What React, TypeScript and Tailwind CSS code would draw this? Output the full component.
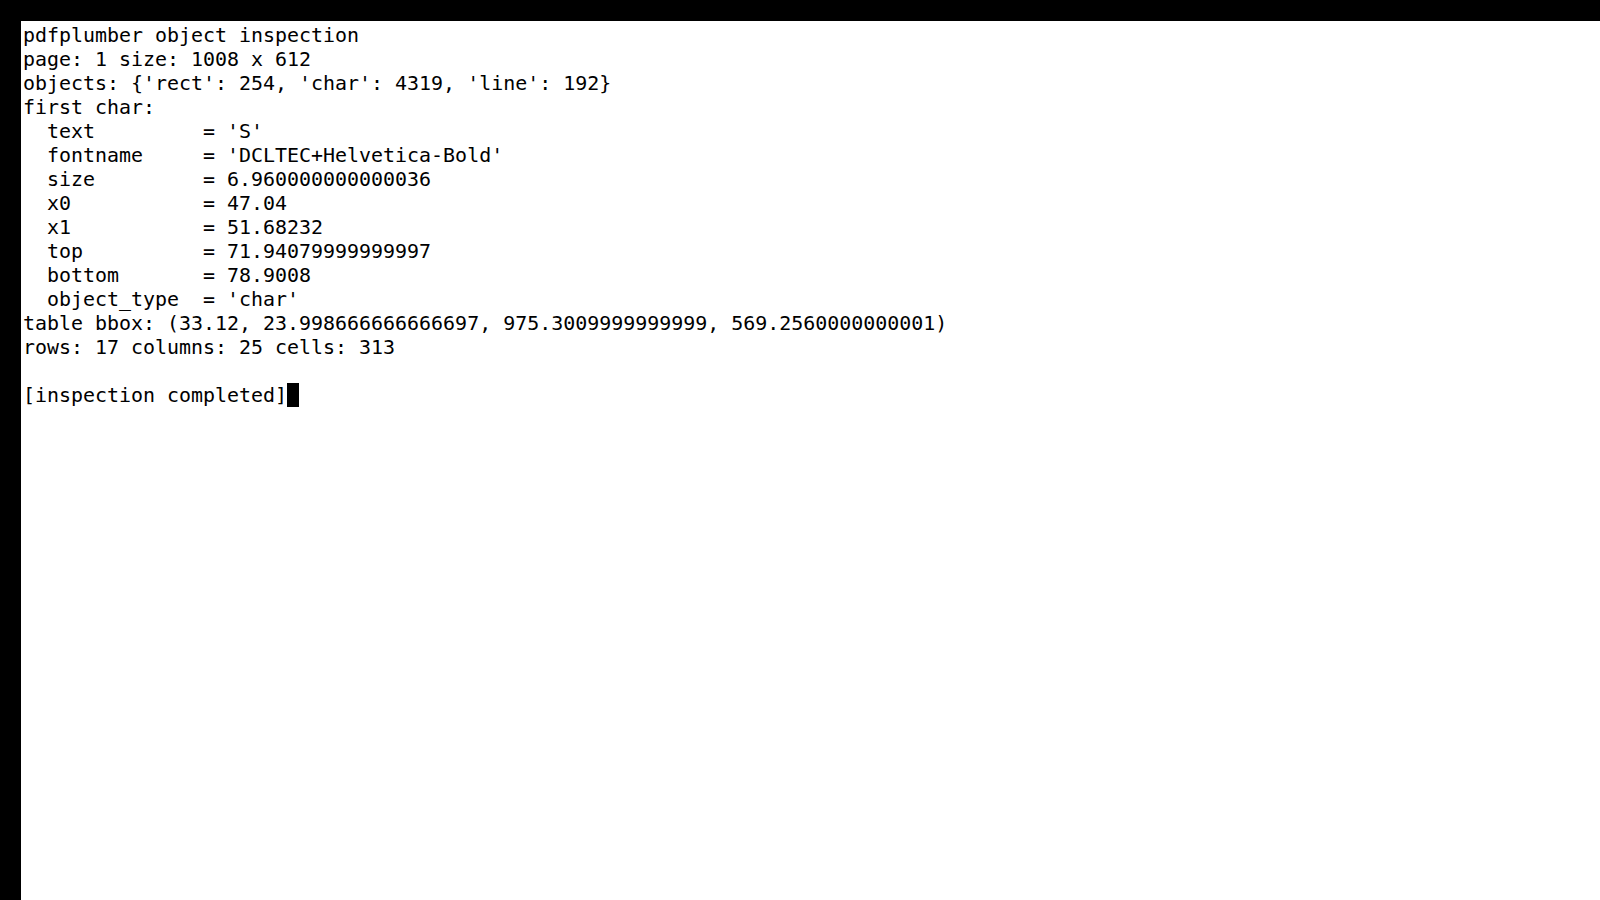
const lines = [
  "pdfplumber object inspection",
  "page: 1 size: 1008 x 612",
  "objects: {'rect': 254, 'char': 4319, 'line': 192}",
  "first char:",
  "  text         = 'S'",
  "  fontname     = 'DCLTEC+Helvetica-Bold'",
  "  size         = 6.960000000000036",
  "  x0           = 47.04",
  "  x1           = 51.68232",
  "  top          = 71.94079999999997",
  "  bottom       = 78.9008",
  "  object_type  = 'char'",
  "table bbox: (33.12, 23.998666666666697, 975.3009999999999, 569.2560000000001)",
  "rows: 17 columns: 25 cells: 313",
  "",
];

export default function App() {
  return (
    <div className="w-[1600px] h-[900px] bg-black pt-[21px] pl-[21px] flex">
      <div className="flex-1 bg-white pt-[2px] pl-[2px] font-['DejaVu_Sans_Mono',monospace] text-[19.94px] leading-[24px] text-black">
        {lines.map((l, i) => (
          <div key={i} className="h-[24px] whitespace-pre">
            {l}
          </div>
        ))}
        <div className="h-[24px] whitespace-pre flex">
          <span>[inspection completed]</span>
          <span className="w-[12px] h-[24px] bg-black" />
        </div>
      </div>
    </div>
  );
}
